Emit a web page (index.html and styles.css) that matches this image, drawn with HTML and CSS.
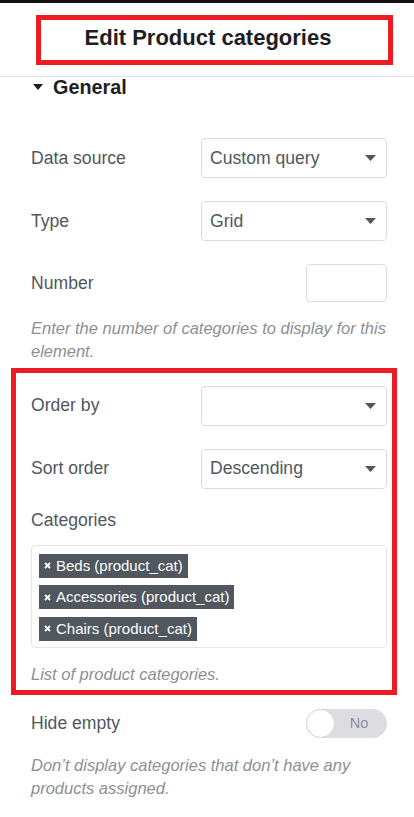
FILE: index.html
```html
<!DOCTYPE html>
<html lang="en">
<head>
<meta charset="utf-8">
<title>Edit Product categories</title>
<link rel="stylesheet" href="styles.css">
</head>
<body>
<div class="topbar"></div>
<header class="header">
  <div class="title-box"><h1 class="title">Edit Product categories</h1></div>
</header>
<main class="panel">
  <div class="section-head">
    <svg class="caret" width="10" height="6" viewBox="0 0 10 6"><polygon points="0,0 10,0 5,6" fill="#1e1e1e"/></svg>
    <span>General</span>
  </div>

  <div class="row first">
    <span class="label">Data source</span>
    <div class="select"><span>Custom query</span><svg class="arrow" width="11" height="6" viewBox="0 0 11 6"><polygon points="0,0 11,0 5.5,6" fill="#50575e"/></svg></div>
  </div>
  <div class="row">
    <span class="label">Type</span>
    <div class="select"><span>Grid</span><svg class="arrow" width="11" height="6" viewBox="0 0 11 6"><polygon points="0,0 11,0 5.5,6" fill="#50575e"/></svg></div>
  </div>
  <div class="row">
    <span class="label">Number</span>
    <div class="number-input"></div>
  </div>
  <p class="help help-number">Enter the number of categories to display for this element.</p>

  <div class="highlight">
    <div class="row first-in">
      <span class="label">Order by</span>
      <div class="select"><span></span><svg class="arrow" width="11" height="6" viewBox="0 0 11 6"><polygon points="0,0 11,0 5.5,6" fill="#50575e"/></svg></div>
    </div>
    <div class="row">
      <span class="label">Sort order</span>
      <div class="select"><span>Descending</span><svg class="arrow" width="11" height="6" viewBox="0 0 11 6"><polygon points="0,0 11,0 5.5,6" fill="#50575e"/></svg></div>
    </div>
    <div class="label cat-label">Categories</div>
    <div class="tags">
      <span class="tag"><svg class="x" width="7" height="7" viewBox="0 0 7 7"><path d="M1 1L6 6M6 1L1 6" stroke="#fff" stroke-width="1.8"/></svg>Beds (product_cat)</span>
      <span class="tag"><svg class="x" width="7" height="7" viewBox="0 0 7 7"><path d="M1 1L6 6M6 1L1 6" stroke="#fff" stroke-width="1.8"/></svg>Accessories (product_cat)</span>
      <span class="tag"><svg class="x" width="7" height="7" viewBox="0 0 7 7"><path d="M1 1L6 6M6 1L1 6" stroke="#fff" stroke-width="1.8"/></svg>Chairs (product_cat)</span>
    </div>
    <p class="help help-cat">List of product categories.</p>
  </div>

  <div class="row toggle-row">
    <span class="label">Hide empty</span>
    <div class="toggle"><span class="knob"></span><span class="toggle-text">No</span></div>
  </div>
  <p class="help help-hide">Don’t display categories that don’t have any products assigned.</p>
</main>
</body>
</html>
```

FILE: styles.css
```css
* { box-sizing: border-box; }
html, body { margin: 0; padding: 0; background: #fff; }
body {
  font-family: "Liberation Sans", Arial, sans-serif;
  width: 414px;
  color: #50575e;
}
.topbar { height: 3px; background: #111; }
.header {
  padding: 12px 0 11px;
  border-bottom: 1px solid #e2e4e7;
}
.title-box {
  margin: 0 21px 0 36px;
  border: 5px solid #ed1c24;
  height: 50px;
  padding: 5px 13px 0 0;
}
.title {
  margin: 0;
  font-size: 22px;
  line-height: 26px;
  font-weight: bold;
  color: #1e1e1e;
  text-align: center;
}
.panel { padding: 0 27px 0 31px; }
.section-head {
  display: flex;
  align-items: center;
  height: 20px;
  font-size: 19.8px;
  line-height: 20px;
  font-weight: bold;
  color: #1e1e1e;
}
.caret { margin: 0 10px 0 2px; }
.row {
  display: flex;
  justify-content: space-between;
  align-items: center;
  margin-top: 23px;
}
.row.first { margin-top: 41px; }
.row.first-in { margin-top: 0; }
.label { font-size: 17.6px; line-height: 23px; color: #50575e; }
.select {
  width: 186px;
  height: 40px;
  border: 1px solid #dcdcde;
  border-radius: 4px;
  display: flex;
  align-items: center;
  justify-content: space-between;
  padding: 0 10px 0 8px;
  font-size: 17.6px;
  color: #50575e;
}
.arrow { display: block; }
.number-input {
  width: 81px;
  height: 38px;
  border: 1px solid #dcdcde;
  border-radius: 4px;
}
.help {
  margin: 0;
  font-size: 16.5px;
  line-height: 23px;
  font-style: italic;
  color: #8c8f94;
}
.help-number { margin-top: 14.5px; }
.highlight {
  margin: 5px -10px 0 -20px;
  border: 5px solid #ed1c24;
  padding: 13px 5px 3.5px 15px;
}
.cat-label { margin-top: 20.5px; }
.tags {
  margin-top: 12.5px;
  border: 1px solid #e5e5e7;
  border-radius: 4px;
  padding: 8px 7px 6px;
  display: flex;
  flex-direction: column;
  align-items: flex-start;
  gap: 7.5px;
}
.tag {
  display: flex;
  align-items: center;
  height: 24px;
  padding: 0 5px;
  background: #50575e;
  color: #fff;
  font-size: 15px;
  line-height: 24px;
}
.x { margin-right: 5px; }
.help-cat { margin-top: 15.5px; }
.toggle-row { margin-top: 14px; }
.toggle {
  width: 81px;
  height: 29px;
  border-radius: 15px;
  background: #dcdde1;
  display: flex;
  align-items: center;
}
.knob {
  width: 29px;
  height: 29px;
  border-radius: 50%;
  background: #fff;
  border: 1px solid #d4d6da;
}
.toggle-text {
  flex: 1;
  text-align: center;
  font-size: 14.5px;
  color: #8a9099;
  padding-right: 4px;
}
.help-hide { margin-top: 16.5px; }
```
